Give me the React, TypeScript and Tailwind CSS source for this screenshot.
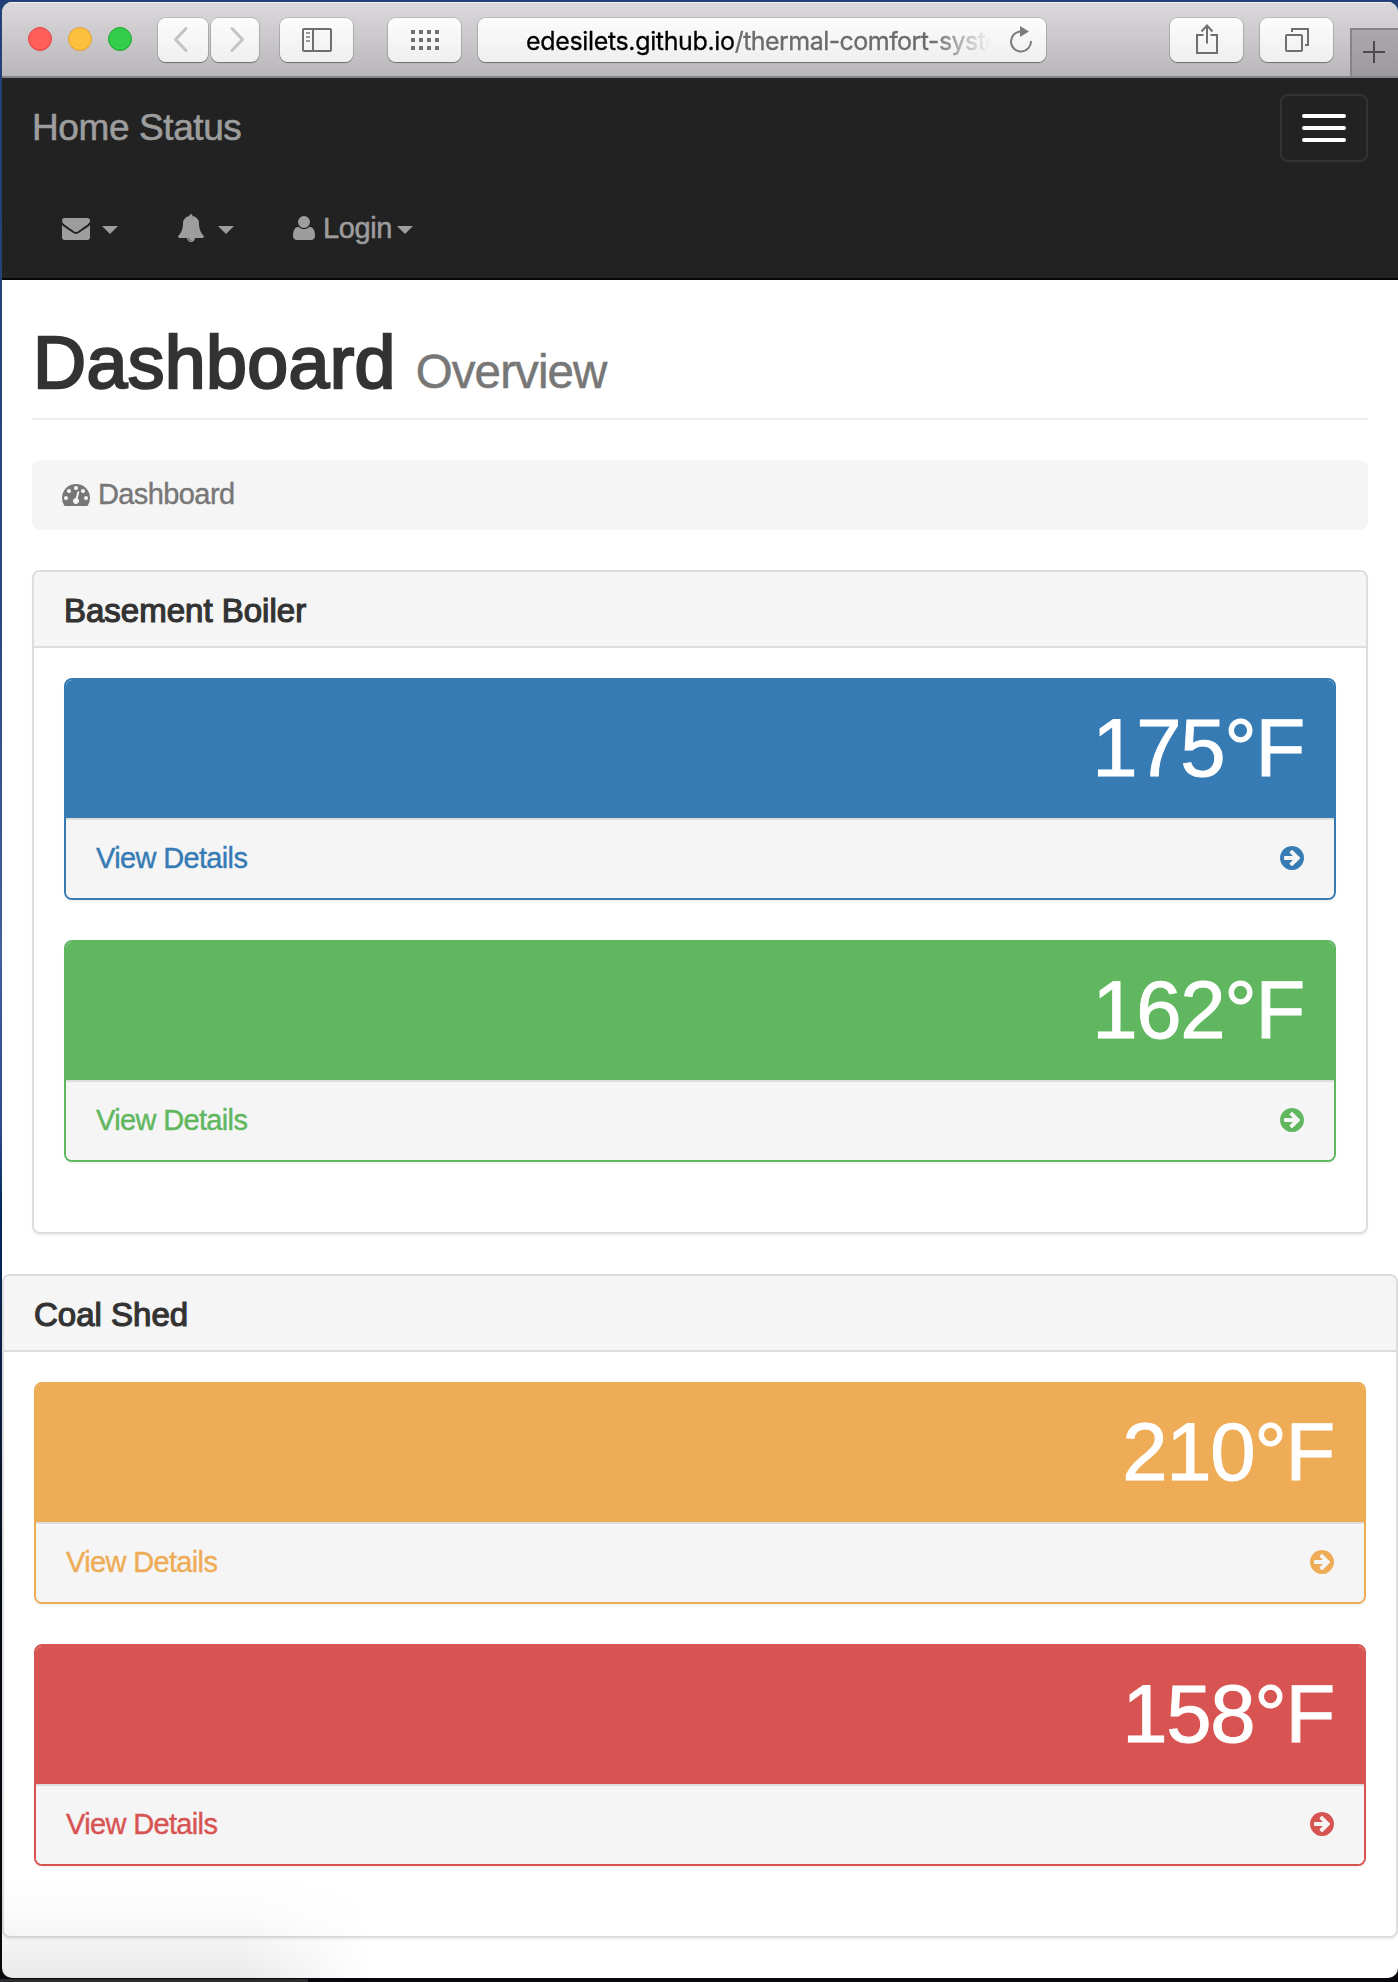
import React from "react";

const ARROW =
  "M1413 896q0-27-18-45l-91-91-362-362q-18-18-45-18t-45 18l-91 91q-18 18-18 45t18 45l189 189h-502q-26 0-45 19t-19 45v128q0 26 19 45t45 19h502l-189 189q-19 19-19 45t19 45l91 91q18 18 45 18t45-18l362-362 91-91q18-18 18-45zm251 0q0 209-103 385.5t-279.5 279.5-385.5 103-385.5-103-279.5-279.5-103-385.5 103-385.5 279.5-279.5 385.5-103 385.5 103 279.5 279.5 103 385.5z";
const ENVELOPE =
  "M1792 710v794q0 66-47 113t-113 47h-1472q-66 0-113-47t-47-113v-794q44 49 101 87 362 246 497 345 57 42 92.5 65.5t94.5 48 110 24.5h2q51 0 110-24.5t94.5-48 92.5-65.5q170-123 498-345 57-39 100-87zm0-294q0 79-49 151t-122 123q-376 261-468 325-10 7-42.5 31t-54 38.5-52 32.5-57.5 27-50 9h-2q-23 0-50-9t-57.5-27-52-32.5-54-38.5-42.5-31q-91-64-262-182.5t-205-142.5q-62-42-117-115.5t-55-136.5q0-78 41.5-130t118.5-52h1472q65 0 112.5 47t47.5 113z";
const BELL =
  "M912 1696q0-16-16-16-59 0-101.5-42.5t-42.5-101.5q0-16-16-16t-16 16q0 73 51.5 124.5t124.5 51.5q16 0 16-16zm816-288q0 52-38 90t-90 38h-448q0 106-75 181t-181 75-181-75-75-181h-448q-52 0-90-38t-38-90q50-42 91-88t85-119.5 74.5-158.5 50-206 19.5-260q0-152 117-282.5t307-158.5q-8-19-8-39 0-40 28-68t68-28 68 28 28 68q0 20-8 39 190 28 307 158.5t117 282.5q0 139 19.5 260t50 206 74.5 158.5 85 119.5 91 88z";
const USER =
  "M1408 131q0-120-73-189.5t-194-69.5h-874q-121 0-194 69.5t-73 189.5q0 53 3.5 103.5t14 109t26.5 108.5t43 97.5t62 81t85.5 53.5t111.5 20q9 0 42-21.5t74.5-48t108-48t133.5-21.5t133.5 21.5t108 48t74.5 48t42 21.5q61 0 111.5-20t85.5-53.5t62-81t43-97.5t26.5-108.5t14-109t3.5-103.5zM1088 1024q0-159-112.5-271.5t-271.5-112.5t-271.5 112.5t-112.5 271.5t112.5 271.5t271.5 112.5t271.5-112.5t112.5-271.5z";
const GAUGE =
  "M384 1152q0-53-37.5-90.5t-90.5-37.5-90.5 37.5-37.5 90.5 37.5 90.5 90.5 37.5 90.5-37.5 37.5-90.5zm192-448q0-53-37.5-90.5t-90.5-37.5-90.5 37.5-37.5 90.5 37.5 90.5 90.5 37.5 90.5-37.5 37.5-90.5zm428 481l101-382q6-26-7.5-48.5t-38.5-29.5-48 6.5-30 39.5l-101 382q-60 5-107 43.5t-63 98.5q-20 77 20 146t117 89 146-20 89-117q16-60-6-117t-72-91zm660-33q0-53-37.5-90.5t-90.5-37.5-90.5 37.5-37.5 90.5 37.5 90.5 90.5 37.5 90.5-37.5 37.5-90.5zm-640-640q0-53-37.5-90.5t-90.5-37.5-90.5 37.5-37.5 90.5 37.5 90.5 90.5 37.5 90.5-37.5 37.5-90.5zm448 192q0-53-37.5-90.5t-90.5-37.5-90.5 37.5-37.5 90.5 37.5 90.5 90.5 37.5 90.5-37.5 37.5-90.5zm320 448q0 261-141 483-19 29-54 29h-1402q-35 0-54-29-141-221-141-483 0-182 71-348t191-286 286-191 348-71 348 71 286 191 191 286 71 348z";

const BUTTON =
  "flex h-[44px] shrink-0 items-center justify-center rounded-[8px] bg-gradient-to-b from-[#fcfcfc] to-[#efefef] shadow-[0_0_0_1px_rgba(0,0,0,0.12),0_1px_1px_rgba(0,0,0,0.35)]";

function Glyph({ d, viewBox = "0 0 1792 1792", className }: { d: string; viewBox?: string; className: string }) {
  return (
    <svg viewBox={viewBox} fill="currentColor" className={`block shrink-0 ${className}`}>
      <path d={d} />
    </svg>
  );
}

function Caret({ className }: { className: string }) {
  return (
    <svg viewBox="0 0 16 8" fill="currentColor" className={`mt-[4px] block h-[8px] w-[16px] shrink-0 ${className}`}>
      <path d="M0 0H16L8 8Z" />
    </svg>
  );
}

function Toolbar() {
  return (
    <div className="flex h-[76px] border-b-2 border-[#868488] bg-gradient-to-b from-[#dbd9dc] to-[#b9b7ba] shadow-[inset_0_1px_0_#f2f1f3]">
      <div className="mt-[25px] ml-[26px] flex gap-[16px]">
        <span className="size-[24px] rounded-full border border-[#e2443f] bg-[#fe5f58]" />
        <span className="size-[24px] rounded-full border border-[#dd9f34] bg-[#febf3f]" />
        <span className="size-[24px] rounded-full border border-[#22a634] bg-[#34cc48]" />
      </div>
      <div className="mt-[16px] ml-[26px] flex gap-[3px]">
        <div className={`${BUTTON} w-[50px]`}>
          <svg viewBox="0 0 50 44" className="h-[44px] w-[50px]" fill="none" stroke="#c3c3c3" strokeWidth="3" strokeLinecap="round" strokeLinejoin="round">
            <path d="M28 10.500L17.500 21.500L28 32.500" />
          </svg>
        </div>
        <div className={`${BUTTON} w-[48px]`}>
          <svg viewBox="0 0 48 44" className="h-[44px] w-[48px]" fill="none" stroke="#c3c3c3" strokeWidth="3" strokeLinecap="round" strokeLinejoin="round">
            <path d="M21 10.500L31.500 21.500L21 32.500" />
          </svg>
        </div>
      </div>
      <div className={`${BUTTON} mt-[16px] ml-[21px] w-[73px]`}>
        <svg viewBox="0 0 30 24" className="h-[24px] w-[30px]" fill="none" stroke="#6f6f6f">
          <rect x="1" y="1" width="28" height="22" rx="1" strokeWidth="2" />
          <path d="M11 1V23" strokeWidth="2" />
          <path d="M4 5H8M4 9H8M4 13H8" strokeWidth="2" stroke="#999" />
        </svg>
      </div>
      <div className={`${BUTTON} mt-[16px] ml-[35px] w-[73px]`}>
        <div className="grid grid-cols-4 gap-[4px]">
          {Array.from({ length: 12 }, (_, i) => (
            <span key={i} className="size-[4px] bg-[#707070]" />
          ))}
        </div>
      </div>
      <div className={`${BUTTON} mt-[16px] ml-[17px] w-[568px]`}>
        <div className="mt-[2px] ml-[48px] w-[465px] overflow-hidden font-['Inter',sans-serif] text-[25px] leading-[36px] tracking-[-0.550px] whitespace-nowrap text-[#6b6b6b] [-webkit-text-stroke:0.3px] [mask-image:linear-gradient(to_right,black_405px,transparent_465px)]">
          <span className="tracking-[-0.350px] text-black">edesilets.github.io</span>/thermal-comfort-syste
        </div>
        <svg viewBox="0 0 24 28" className="mr-auto ml-[18px] h-[28px] w-[24px]" fill="none" stroke="#7c7c7c" strokeWidth="2">
          <path d="M11.500 5.500A10 10 0 1 0 22 15" />
          <path d="M11 0L20 5.500L11 11Z" fill="#7c7c7c" stroke="none" />
        </svg>
      </div>
      <div className={`${BUTTON} mt-[16px] ml-[124px] w-[73px]`}>
        <svg viewBox="0 0 22 30" className="mb-[2px] h-[30px] w-[22px]" fill="none" stroke="#6f6f6f" strokeWidth="2">
          <path d="M7.500 11H1V29H21V11H14.500M11 19.500V1.500M5.500 7.500L11 1.500L16.500 7.500" />
        </svg>
      </div>
      <div className={`${BUTTON} mt-[16px] ml-[17px] w-[73px]`}>
        <svg viewBox="0 0 24 24" className="h-[24px] w-[24px]" fill="none" stroke="#6f6f6f" strokeWidth="2">
          <rect x="1" y="7" width="16" height="16" rx="1" />
          <path d="M7 4V1H23V17H20" />
        </svg>
      </div>
      <div className="mt-[26px] ml-auto flex w-[48px] items-center justify-center border-t-2 border-l-2 border-[#868488] bg-gradient-to-b from-[#aaa8ab] to-[#9c9a9d] pr-[2px] pb-[2px]">
        <svg viewBox="0 0 22 22" className="h-[22px] w-[22px]" fill="none" stroke="#4b494c" strokeWidth="2">
          <path d="M11 0V22M0 11H22" />
        </svg>
      </div>
    </div>
  );
}

function Navbar() {
  return (
    <nav className="h-[202px] border-b-2 border-[#080808] bg-[#222] text-[#9d9d9d]">
      <div className="flex h-[100px] justify-between px-[30px]">
        <span className="mt-[30px] text-[37px] leading-[40px] tracking-[-0.4px] [-webkit-text-stroke:0.6px]">Home Status</span>
        <button className="mt-[16px] flex h-[68px] w-[88px] flex-col items-center gap-[8px] rounded-[8px] border-2 border-[#333] pt-[18px]">
          <span className="h-[4px] w-[44px] rounded-[2px] bg-white" />
          <span className="h-[4px] w-[44px] rounded-[2px] bg-white" />
          <span className="h-[4px] w-[44px] rounded-[2px] bg-white" />
        </button>
      </div>
      <div className="flex h-[100px] items-center pl-[60px] text-[29px] leading-[40px]">
        <Glyph d={ENVELOPE} className="size-[28px]" />
        <Caret className="ml-[12px]" />
        <Glyph d={BELL} className="ml-[59px] size-[28px]" />
        <Caret className="ml-[13px]" />
        <svg viewBox="0 0 1408 1792" fill="currentColor" className="ml-[59px] block h-[28px] w-[22px] shrink-0">
          <path transform="matrix(1 0 0 -1 0 1536)" d={USER} />
        </svg>
        <span className="ml-[8px] w-[71px] tracking-[-0.4px] [-webkit-text-stroke:0.5px]">Login</span>
        <Caret className="ml-[3px]" />
      </div>
    </nav>
  );
}

type Tone = { box: string; head: string; link: string };

const TONES: Record<string, Tone> = {
  blue: { box: "border-[#377bb5]", head: "bg-[#377bb5]", link: "text-[#377bb5]" },
  green: { box: "border-[#60b760]", head: "bg-[#60b760]", link: "text-[#60b760]" },
  yellow: { box: "border-[#eeac57]", head: "bg-[#eeac57]", link: "text-[#eeac57]" },
  red: { box: "border-[#d75452]", head: "bg-[#d75452]", link: "text-[#d75452]" },
};

function Reading({ value, tone }: { value: string; tone: Tone }) {
  return (
    <div className={`mb-[40px] h-[222px] overflow-hidden rounded-[8px] border-2 shadow-[0_2px_2px_rgba(0,0,0,0.05)] ${tone.box}`}>
      <div className={`h-[138px] px-[30px] pt-[28px] text-right text-[81.500px] leading-[80px] tracking-[-1.300px] text-white [-webkit-text-stroke:1px] ${tone.head}`}>
        {value}
      </div>
      <div className={`flex h-[80px] items-center justify-between border-t-2 border-[#ddd] bg-[#f5f5f5] px-[30px] pb-[2px] text-[29px] leading-[40px] ${tone.link}`}>
        <span className="tracking-[-0.650px] [-webkit-text-stroke:0.4px]">View Details</span>
        <Glyph d={ARROW} viewBox="128 0 1536 1792" className="h-[28px] w-[24px]" />
      </div>
    </div>
  );
}

function Panel({ title, children, className }: { title: string; children: React.ReactNode; className: string }) {
  return (
    <section className={`h-[664px] rounded-[8px] border-2 border-[#ddd] bg-white shadow-[0_2px_2px_rgba(0,0,0,0.05)] ${className}`}>
      <div className="h-[76px] rounded-t-[6px] border-b-2 border-[#ddd] bg-[#f5f5f5] px-[30px] pt-[21px]">
        <h3 className="text-[33px] leading-[36px] tracking-[0px] text-[#333] [-webkit-text-stroke:1.2px_#333]">{title}</h3>
      </div>
      <div className="p-[30px]">{children}</div>
    </section>
  );
}

export default function App() {
  return (
    <div className="h-[1982px] w-[1398px] overflow-hidden bg-[linear-gradient(to_bottom,#204076_0%,#264780_30%,#40619a_48%,#2c4c8a_57%,#04285c_61%,#0a1a3a_72%,#040a12_80%,#08080c_100%)] pt-[2px] pl-[2px] font-['Liberation_Sans',Arial,sans-serif]">
      <div className="relative h-[1976px] w-[1396px] overflow-hidden rounded-[10px] bg-white">
        <Toolbar />
        <Navbar />
        <main>
          <div className="px-[30px] pt-[40px]">
            <h1 className="flex h-[100px] items-baseline border-b-2 border-[#eee] pt-[3px] pl-[1px] text-[73.500px] leading-[80px] tracking-[0.350px] text-[#333] [-webkit-text-stroke:2.4px_#333]">
              Dashboard
              <small className="ml-[20px] text-[47.500px] leading-none tracking-[-0.900px] text-[#777] [-webkit-text-stroke:0.5px_#777]">Overview</small>
            </h1>
            <div className="mt-[40px] flex h-[70px] items-center rounded-[8px] bg-[#f5f5f5] px-[30px] text-[29px] leading-[40px] text-[#777]">
              <Glyph d={GAUGE} className="mb-[2px] size-[28px]" />
              <span className="mb-[2px] ml-[8px] tracking-[-0.600px] [-webkit-text-stroke:0.4px]">Dashboard</span>
            </div>
            <Panel title="Basement Boiler" className="mt-[40px]">
              <Reading value="175°F" tone={TONES.blue} />
              <Reading value="162°F" tone={TONES.green} />
            </Panel>
          </div>
          <Panel title="Coal Shed" className="mt-[40px]">
            <Reading value="210°F" tone={TONES.yellow} />
            <Reading value="158°F" tone={TONES.red} />
          </Panel>
        </main>
        <div className="absolute bottom-0 left-0 h-[100px] w-[390px] bg-[linear-gradient(to_bottom,transparent,rgba(0,0,0,0.02)_40%,rgba(0,0,0,0.085))] [mask-image:linear-gradient(90deg,black_60%,transparent_95%)]" />
      </div>
      <div className="mt-[1px] -ml-[2px] h-[3px] w-[308px] bg-[#2b2b2e]" />
    </div>
  );
}
